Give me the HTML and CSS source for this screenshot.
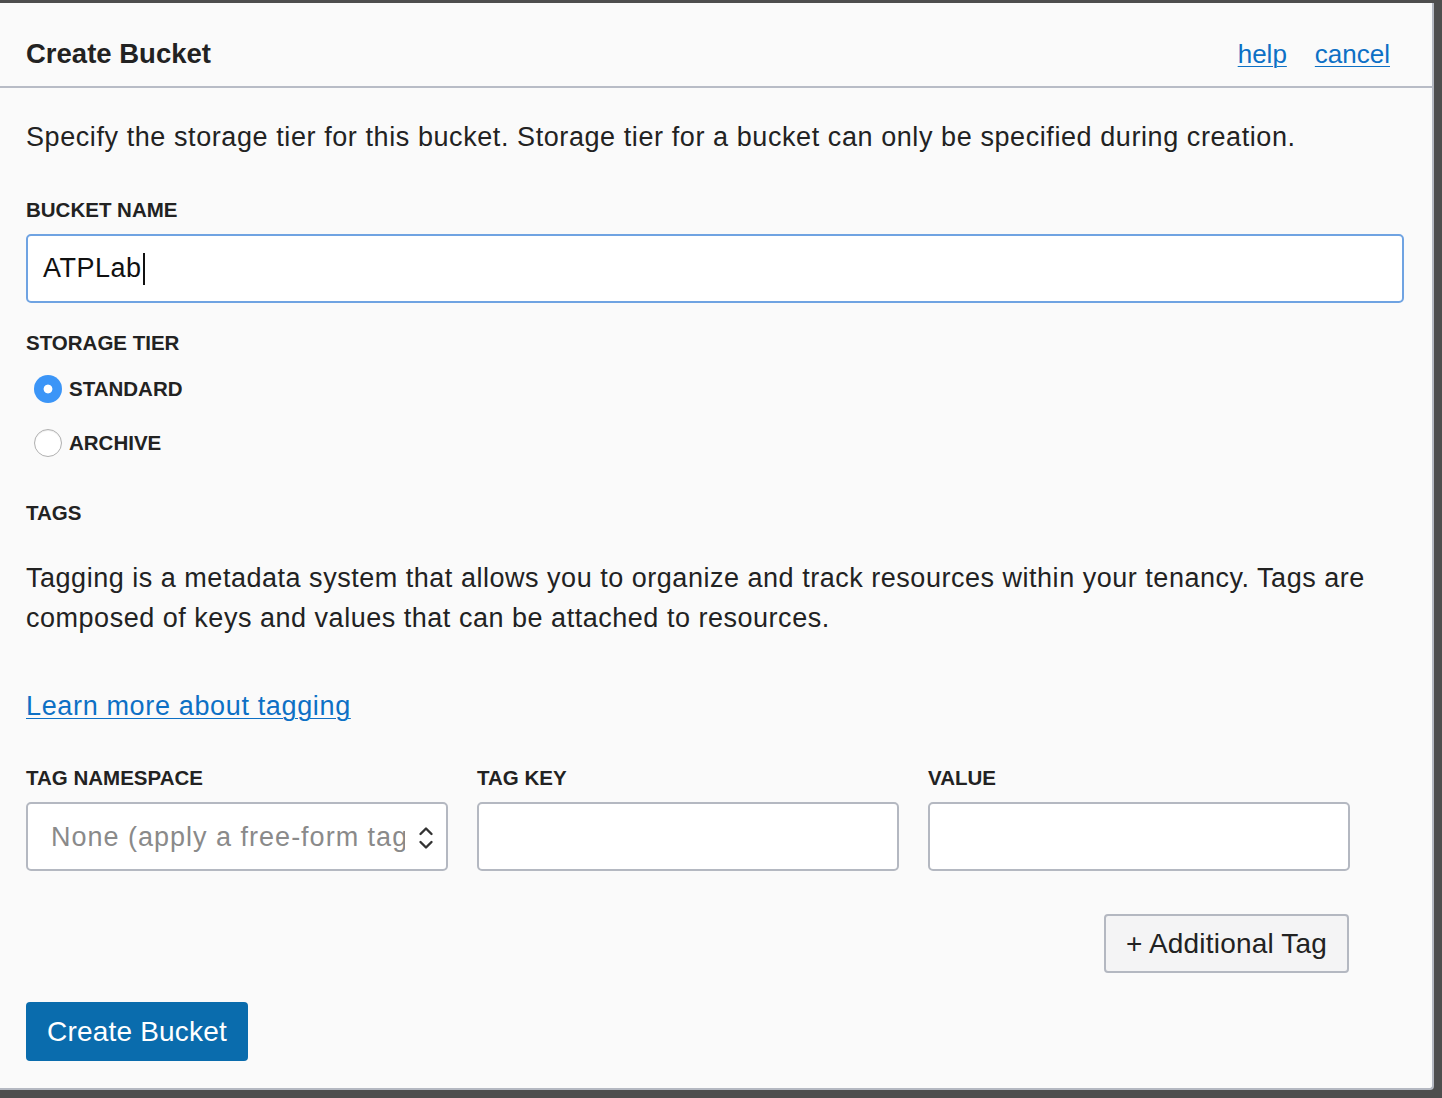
FILE: index.html
```html
<!DOCTYPE html>
<html>
<head>
<meta charset="utf-8">
<link rel="stylesheet" href="styles.css">
</head>
<body>
<div class="panel">
  <header class="head">
    <h1 class="title">Create Bucket</h1>
    <nav class="head-links">
      <a class="link" href="#">help</a>
      <a class="link" href="#">cancel</a>
    </nav>
  </header>
  <main class="content">
    <p class="intro">Specify the storage tier for this bucket. Storage tier for a bucket can only be specified during creation.</p>

    <div class="label label-name">BUCKET NAME</div>
    <div class="input input-focus"><span class="input-text">ATPLab</span><span class="caret"></span></div>

    <div class="label label-tier">STORAGE TIER</div>
    <div class="radios">
      <div class="radio-row"><span class="radio radio-on"></span><span class="radio-text">STANDARD</span></div>
      <div class="radio-row"><span class="radio"></span><span class="radio-text">ARCHIVE</span></div>
    </div>

    <div class="label label-tags">TAGS</div>
    <p class="tags-desc">Tagging is a metadata system that allows you to organize and track resources within your tenancy. Tags are composed of keys and values that can be attached to resources.</p>
    <a class="link learn" href="#">Learn more about tagging</a>

    <div class="tag-grid">
      <div class="tag-col">
        <div class="label">TAG NAMESPACE</div>
        <div class="input input-plain select">
          <span class="select-text">None (apply a free-form tag)</span>
          <svg class="chev" width="16" height="30" viewBox="0 0 16 30"><path d="M2.5 11 L8 5.5 L13.5 11" fill="none" stroke="#333" stroke-width="2.4" stroke-linecap="round" stroke-linejoin="round"/><path d="M2.5 19 L8 24.5 L13.5 19" fill="none" stroke="#333" stroke-width="2.4" stroke-linecap="round" stroke-linejoin="round"/></svg>
        </div>
      </div>
      <div class="tag-col">
        <div class="label">TAG KEY</div>
        <div class="input input-plain"></div>
      </div>
      <div class="tag-col">
        <div class="label">VALUE</div>
        <div class="input input-plain"></div>
      </div>
    </div>

    <div class="add-row"><button class="btn btn-secondary">+ Additional Tag</button></div>
    <button class="btn btn-primary">Create Bucket</button>
  </main>
</div>
</body>
</html>
```
FILE: styles.css
```css
html, body {
  margin: 0;
  padding: 0;
}
body {
  background: #4e4e4e;
  font-family: "Liberation Sans", Arial, Helvetica, sans-serif;
  color: #222;
  width: 1442px;
  height: 1098px;
  overflow: hidden;
}
.panel {
  margin-top: 3px;
  width: 1434px;
  height: 1087px;
  background: #fafafa;
  border-right: 2px solid #b4b8c1;
  border-bottom: 2px solid #b4b8c1;
  border-bottom-right-radius: 4px;
  box-sizing: border-box;
}
.head {
  height: 85px;
  border-bottom: 2px solid #b8bcc6;
  box-sizing: border-box;
  display: flex;
  align-items: flex-end;
  justify-content: space-between;
  padding: 0 42px 16px 26px;
}
.title {
  margin: 0;
  font-size: 27.5px;
  font-weight: bold;
  line-height: 32px;
  color: #222;
}
.head-links {
  display: flex;
  gap: 28px;
  font-size: 26px;
  line-height: 32px;
}
.link {
  color: #0d70c5;
  text-decoration: underline;
  text-underline-offset: 3px;
  text-decoration-thickness: 1px;
}
.content {
  padding: 0 28px 0 26px;
}
.intro {
  margin: 33px 0 0;
  font-size: 27px;
  line-height: 32px;
  letter-spacing: 0.58px;
}
.label {
  font-size: 20.5px;
  font-weight: bold;
  line-height: 24px;
  color: #222;
}
.label-name {
  margin-top: 45px;
}
.input {
  box-sizing: border-box;
  height: 69px;
  background: #fff;
  border: 2px solid #b4b8c1;
  border-radius: 5px;
}
.input-focus {
  margin-top: 12px;
  border-color: #6fa3e2;
  display: flex;
  align-items: center;
  padding-left: 15px;
  font-size: 27px;
  letter-spacing: 0.5px;
  color: #111;
}
.caret {
  display: inline-block;
  width: 2px;
  height: 32px;
  background: #111;
  margin-left: 1px;
}
.label-tier {
  margin-top: 28px;
}
.radios {
  margin-top: 20px;
  padding-left: 8px;
  display: flex;
  flex-direction: column;
  gap: 26px;
}
.radio-row {
  display: flex;
  align-items: center;
  gap: 7px;
  height: 28px;
}
.radio {
  box-sizing: border-box;
  width: 28px;
  height: 28px;
  border-radius: 50%;
  border: 1px solid #b0b0b0;
  background: #fff;
  box-shadow: inset 0 1px 1px rgba(0,0,0,0.08);
}
.radio-on {
  border: none;
  background: radial-gradient(circle, #fff 0, #fff 4px, #3b95f7 4.8px);
  box-shadow: none;
}
.radio-text {
  font-size: 20.5px;
  font-weight: bold;
}
.label-tags {
  margin-top: 44px;
}
.tags-desc {
  margin: 33px 0 0;
  font-size: 27px;
  line-height: 40px;
  letter-spacing: 0.52px;
}
.learn {
  display: inline-block;
  margin-top: 52px;
  font-size: 27px;
  line-height: 32px;
  letter-spacing: 0.65px;
}
.tag-grid {
  margin-top: 44px;
  display: grid;
  grid-template-columns: 422px 422px 422px;
  column-gap: 29px;
}
.tag-col .label {
  margin-bottom: 12px;
}
.select {
  display: flex;
  align-items: center;
  padding: 2px 14px 0 23px;
  gap: 0;
  overflow: hidden;
}
.select-text {
  width: 354px;
  flex: none;
  white-space: nowrap;
  overflow: hidden;
  text-overflow: clip;
  font-size: 27px;
  letter-spacing: 1px;
  color: #8a8a8a;
}
.chev {
  flex: none;
  margin-left: 13px;
}
.add-row {
  margin-top: 43px;
  display: flex;
  justify-content: flex-end;
  width: 1323px;
}
.btn {
  font-family: "Liberation Sans", Arial, Helvetica, sans-serif;
  font-size: 28px;
  box-sizing: border-box;
  height: 59px;
  border-radius: 4px;
  cursor: pointer;
  padding: 0;
}
.btn-secondary {
  width: 245px;
  background: #f4f4f5;
  border: 2px solid #b4b8c1;
  color: #222;
  letter-spacing: 0.2px;
}
.btn-primary {
  display: block;
  margin-top: 29px;
  width: 222px;
  background: #0a6cad;
  border: none;
  color: #fff;
  letter-spacing: 0.2px;
}
```
